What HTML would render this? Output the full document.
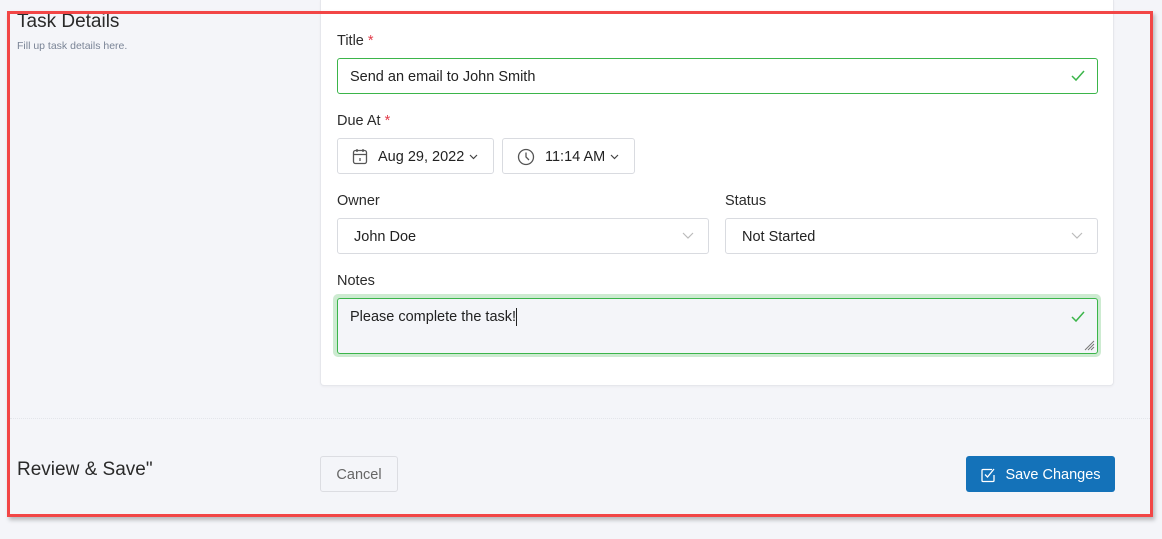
<!DOCTYPE html>
<html><head><meta charset="utf-8"><style>
*{box-sizing:border-box;margin:0;padding:0}
body{width:1162px;height:539px;background:#f4f5f9;font-family:"Liberation Sans",sans-serif;position:relative;overflow:hidden;color:#1f1f1f}
.frame{position:absolute;left:7px;top:11px;width:1146px;height:506px;border:3px solid #f24646;box-shadow:2px 3px 4px rgba(0,0,0,.25)}
.abs{position:absolute}
.card{position:absolute;left:320px;top:0;width:794px;height:386px;background:#fff;border:1px solid #e6e7ec;border-top:none;border-radius:0 0 4px 4px;box-shadow:0 1px 2px rgba(0,0,0,.04)}
.lbl{position:absolute;font-size:14.5px;color:#2b2b2b}
.lbl .r{color:#e23c4a}
.inp{position:absolute;background:#fff;border:1px solid #d9dbe0;border-radius:3px;font-size:14.5px;color:#222;display:flex;align-items:center;padding-top:1px}
.chev{position:absolute;right:14px;top:13px}
</style></head><body>
<div class="abs" style="left:17px;top:11px;font-size:19px;color:#2a2a2a">Task Details</div>
<div class="abs" style="left:17px;top:40px;font-size:10.5px;color:#7a8496">Fill up task details here.</div>
<div class="card"></div>
<div class="lbl" style="left:337px;top:33px">Title <span class="r">*</span></div>
<div class="inp" style="left:337px;top:58px;width:761px;height:36px;border-color:#3bb54a;padding-left:12px">Send an email to John Smith
<svg class="abs" style="right:12px;top:11px" width="14" height="12" viewBox="0 0 14 12"><path d="M1 6l4 4 8-9" fill="none" stroke="#3bb54a" stroke-width="1.5"/></svg></div>
<div class="lbl" style="left:337px;top:113px">Due At <span class="r">*</span></div>
<div class="inp" style="left:337px;top:138px;width:157px;height:36px;padding-left:14px">
<svg width="16" height="17" viewBox="0 0 16 17" style="margin-right:10px"><rect x="1.5" y="2.5" width="13" height="13" rx="2" fill="none" stroke="#555" stroke-width="1.3"/><path d="M1.5 6.5h13M5 1v3M11 1v3M8 10v3" stroke="#555" stroke-width="1.3"/></svg>Aug 29, 2022
<svg width="9" height="6" viewBox="0 0 9 6" style="margin-left:5px"><path d="M1 1l3.5 3.5L8 1" fill="none" stroke="#444" stroke-width="1.2"/></svg></div>
<div class="inp" style="left:502px;top:138px;width:133px;height:36px;padding-left:14px">
<svg width="18" height="18" viewBox="0 0 18 18" style="margin-right:10px"><circle cx="9" cy="9" r="7.5" fill="none" stroke="#555" stroke-width="1.3"/><path d="M9 4.5V9l3 3" fill="none" stroke="#555" stroke-width="1.3"/></svg>11:14 AM
<svg width="9" height="6" viewBox="0 0 9 6" style="margin-left:5px"><path d="M1 1l3.5 3.5L8 1" fill="none" stroke="#444" stroke-width="1.2"/></svg></div>
<div class="lbl" style="left:337px;top:193px">Owner</div>
<div class="lbl" style="left:725px;top:193px">Status</div>
<div class="inp" style="left:337px;top:218px;width:372px;height:36px;padding-left:16px">John Doe
<svg class="chev" width="12" height="8" viewBox="0 0 12 8"><path d="M1 1l5 5 5-5" fill="none" stroke="#bbb" stroke-width="1.2"/></svg></div>
<div class="inp" style="left:725px;top:218px;width:373px;height:36px;padding-left:16px">Not Started
<svg class="chev" width="12" height="8" viewBox="0 0 12 8"><path d="M1 1l5 5 5-5" fill="none" stroke="#bbb" stroke-width="1.2"/></svg></div>
<div class="lbl" style="left:337px;top:273px">Notes</div>
<div class="abs" style="left:333px;top:294px;width:768px;height:63px;background:#cdebd1;border-radius:5px"></div>
<div class="inp" style="left:337px;top:298px;width:761px;height:56px;border-color:#3bb54a;background:#f4f5f9;align-items:flex-start;padding:10px 12px">Please complete the task!<span style="display:inline-block;width:1px;height:18px;background:#222;margin-top:-1px"></span>
<svg class="abs" style="right:12px;top:12px" width="14" height="12" viewBox="0 0 14 12"><path d="M1 6l4 4 8-9" fill="none" stroke="#3bb54a" stroke-width="1.5"/></svg>
<svg class="abs" style="right:2px;bottom:2px" width="12" height="12" viewBox="0 0 12 12"><path d="M11 2L2 11M11 5L5 11M11 8L8 11" stroke="#777" stroke-width="1"/></svg></div>
<div class="abs" style="left:10px;top:418px;width:1140px;border-top:1px dotted #e3e5ea"></div>
<div class="abs" style="left:17px;top:459px;font-size:19px;color:#2a2a2a">Review &amp; Save"</div>
<div class="abs" style="left:320px;top:456px;width:78px;height:36px;border:1px solid #dcdde2;border-radius:3px;font-size:14.5px;color:#666;display:flex;align-items:center;justify-content:center;padding-top:1px">Cancel</div>
<div class="abs" style="left:966px;top:456px;width:149px;height:36px;background:#1472b9;border-radius:3px;font-size:14.5px;color:#fff;display:flex;align-items:center;justify-content:center;padding-top:1px">
<svg width="16" height="16" viewBox="0 0 16 16" style="margin-right:9px"><path d="M12 2.5H3a1 1 0 0 0-1 1v10a1 1 0 0 0 1 1h10a1 1 0 0 0 1-1V8" fill="none" stroke="#fff" stroke-width="1.3"/><path d="M5 7.5l2.5 2.5L14 2" fill="none" stroke="#fff" stroke-width="1.3"/></svg>Save Changes</div>
<div class="frame"></div>
</body></html>
